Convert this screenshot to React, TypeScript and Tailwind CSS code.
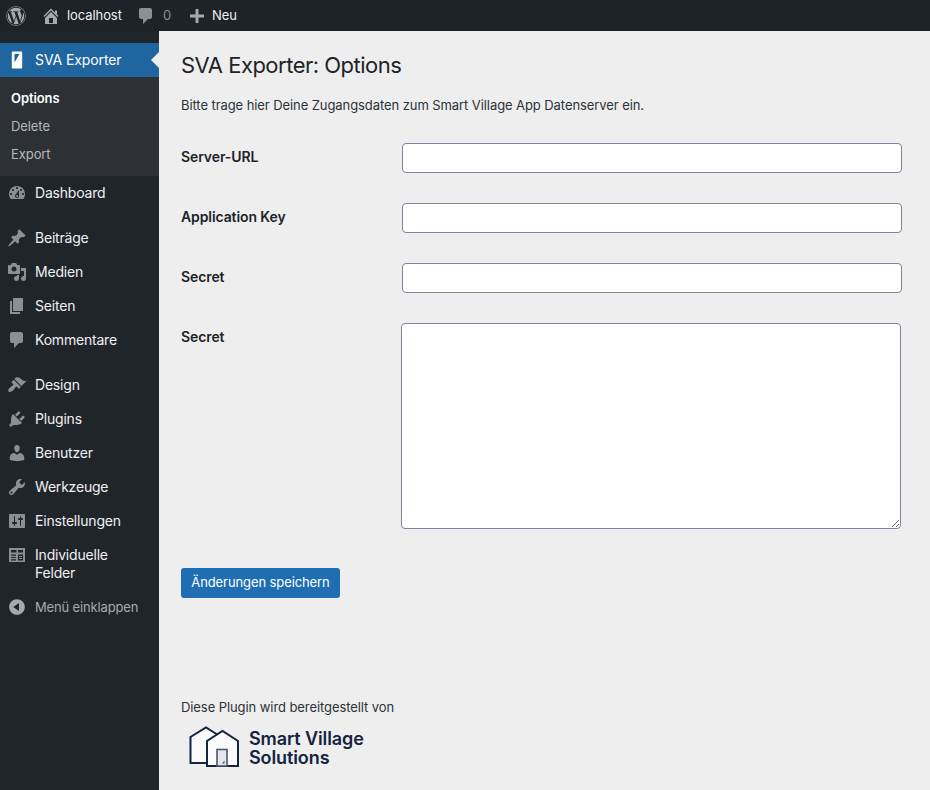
import React from "react";
import { FaWordpress } from "react-icons/fa";

const P: Record<string, string> = {
  home: "M16 8.5l1.53 1.53-1.06 1.06L10 4.62l-6.47 6.47-1.06-1.06L10 2.5l4 4v-2h2v4zm-6-2.46l6 5.99V18H4v-5.97zM12 17v-5H8v5h4z",
  comment: "M5 2h9c1.1 0 2 .9 2 2v7c0 1.1-.9 2-2 2h-2l-5 5v-5H5c-1.1 0-2-.9-2-2V4c0-1.1.9-2 2-2z",
  plus: "M17 8.5v3h-5.5V17h-3v-5.5H3v-3h5.5V3h3v5.5z",
  dashboard: "M3.76 16h12.48c1.1-1.37 1.76-3.11 1.76-5 0-4.42-3.58-8-8-8s-8 3.58-8 8c0 1.89.66 3.63 1.76 5zM10 4c.55 0 1 .45 1 1s-.45 1-1 1-1-.45-1-1 .45-1 1-1zM6 6c.55 0 1 .45 1 1s-.45 1-1 1-1-.45-1-1 .45-1 1-1zm8 0c.55 0 1 .45 1 1s-.45 1-1 1-1-.45-1-1 .45-1 1-1zm-5.37 5.55L12 7v6c0 1.1-.9 2-2 2s-2-.9-2-2c0-.57.24-1.08.63-1.45zM4 10c.55 0 1 .45 1 1s-.45 1-1 1-1-.45-1-1 .45-1 1-1zm12 0c.55 0 1 .45 1 1s-.45 1-1 1-1-.45-1-1 .45-1 1-1zm-5 3c0-.55-.45-1-1-1s-1 .45-1 1 .45 1 1 1 1-.45 1-1z",
  post: "M10.44 3.02l1.82-1.82 6.36 6.35-1.83 1.82c-1.05-.68-2.48-.57-3.41.36l-.75.75c-.92.93-1.04 2.35-.35 3.41l-1.83 1.82-2.41-2.41-2.8 2.79c-.42.42-3.38 2.71-3.8 2.29s1.86-3.39 2.28-3.81l2.79-2.79L4.1 9.36l1.83-1.82c1.05.69 2.48.57 3.4-.36l.75-.75c.93-.92 1.05-2.35.36-3.41z",
  media: "M13 11V4c0-.55-.45-1-1-1h-1.67L9 1H5L3.67 3H2c-.55 0-1 .45-1 1v7c0 .55.45 1 1 1h10c.55 0 1-.45 1-1zM7 4.5c1.38 0 2.5 1.12 2.5 2.5S8.38 9.5 7 9.5 4.5 8.38 4.5 7 5.62 4.5 7 4.5zM14 6h5v10.5c0 1.38-1.12 2.5-2.5 2.5S14 17.88 14 16.5s1.12-2.5 2.5-2.5c.17 0 .34.02.5.05V9h-3V6zm-4 8.05V13h2v3.5c0 1.38-1.12 2.5-2.5 2.5S7 17.88 7 16.5 8.12 14 9.5 14c.17 0 .34.02.5.05z",
  page: "M6 15V2h10v13H6zm-1 1h8v2H3V5h2v11z",
  appearance: "M14.48 11.06L7.41 3.99l1.5-1.5c.5-.56 2.3-.47 3.51.32 1.21.8 1.43 1.28 2.91 2.1 1.18.64 2.45 1.26 4.45.85zm-.71.71L6.7 4.7 4.93 6.47c-.39.39-.39 1.02 0 1.41l1.06 1.06c.39.39.39 1.03 0 1.42-.6.6-1.43 1.11-2.21 1.69-.35.26-.7.53-1.01.84C1.43 13.23.78 15.82 1.53 16.57c.75.75 3.34.1 4.68-1.24.31-.31.58-.66.84-1.01.58-.78 1.09-1.61 1.69-2.21.39-.39 1.02-.39 1.41 0l1.06 1.06c.39.39 1.02.39 1.41 0z",
  plugins: "M13.11 4.36L9.87 7.6 8 5.73l3.24-3.24c.35-.34 1.05-.2 1.56.32.52.51.66 1.21.31 1.55zm-8 1.77l.91-1.12 9.01 9.01-1.19.84c-.71.71-2.63 1.16-3.82 1.16H6.14L4.9 17.26c-.59.59-1.54.59-2.12 0-.59-.58-.59-1.53 0-2.12l1.24-1.24v-3.88c0-1.13.4-3.19 1.09-3.89zm7.26 3.97l3.24-3.24c.34-.35 1.04-.21 1.55.31.52.51.66 1.21.31 1.55l-3.24 3.25z",
  users: "M10 9.25c-2.27 0-2.73-3.44-2.73-3.44C7 4.02 7.82 2 9.97 2c2.16 0 2.98 2.02 2.71 3.81 0 0-.41 3.44-2.68 3.44zm0 2.57L12.72 10c2.39 0 4.52 2.33 4.52 4.53v2.49s-3.65 1.13-7.24 1.13c-3.65 0-7.24-1.13-7.24-1.13v-2.49c0-2.25 1.94-4.48 4.47-4.48z",
  tools: "M16.68 9.77c-1.34 1.34-3.3 1.67-4.95.99l-5.41 6.52c-.99.99-2.59.99-3.58 0s-.99-2.59 0-3.57l6.52-5.42c-.68-1.65-.35-3.61.99-4.95 1.28-1.28 3.12-1.62 4.72-1.06l-2.89 2.89 2.82 2.82 2.86-2.87c.53 1.58.18 3.39-1.08 4.65zM3.81 16.21c.4.39 1.04.39 1.43 0 .4-.4.4-1.04 0-1.43-.39-.4-1.03-.4-1.43 0-.39.39-.39 1.03 0 1.43z",
  settings: "M18 16V4c0-.55-.45-1-1-1H3c-.55 0-1 .45-1 1v12c0 .55.45 1 1 1h14c.55 0 1-.45 1-1zM8 11h1c.55 0 1 .45 1 1s-.45 1-1 1H8v1.5c0 .28-.22.5-.5.5s-.5-.22-.5-.5V13H6c-.55 0-1-.45-1-1s.45-1 1-1h1V5.5c0-.28.22-.5.5-.5s.5.22.5.5V11zm5-2h-1c-.55 0-1-.45-1-1s.45-1 1-1h1V5.5c0-.28.22-.5.5-.5s.5.22.5.5V7h1c.55 0 1 .45 1 1s-.45 1-1 1h-1v5.5c0 .28-.22.5-.5.5s-.5-.22-.5-.5V9z",
  fields: "M2 3h16v14H2zM4 5v2.5h5.5V5zM11 5v2.5h5V5zM4 9.5v1.2h5v-1.2zM4 11.9v1.2h5v-1.2zM4 14.3v1.2h5v-1.2zM11 9.5v6h5v-6zM12 11h3v1h-3zM12 13h3v1h-3z",
  collapse: "M10 2.16c4.33 0 7.84 3.51 7.84 7.84s-3.51 7.84-7.84 7.84S2.16 14.33 2.16 10 5.71 2.16 10 2.16zm2 11.72V6.12L6.18 9.97z",
  phone: "M6 1.5h8c.8 0 1.2.4 1.2 1.2v14.6c0 .8-.4 1.2-1.2 1.2H6c-.8 0-1.2-.4-1.2-1.2V2.7c0-.8.4-1.2 1.2-1.2zM7.5 4v8.5L12.5 4z",
};

function Icon({ name, className }: { name: string; className: string }) {
  return (
    <svg viewBox="0 0 20 20" className={className} fill="currentColor" fillRule="evenodd" aria-hidden="true">
      <path d={P[name]} />
    </svg>
  );
}

function Item({ icon, lines }: { icon: string; lines: string[] }) {
  return (
    <div className="flex py-[7px] pl-[7px] text-[14px] leading-[18px] tracking-[-0.2px] text-[#f0f0f1]">
      <Icon name={icon} className="mr-[8px] h-5 w-5 shrink-0 text-[#8c8f94]" />
      <div className="-mb-px pt-px">
        {lines.map((l) => (
          <div key={l}>{l}</div>
        ))}
      </div>
    </div>
  );
}

function Row({ label }: { label: string }) {
  return (
    <div className="flex h-[30px] items-center">
      <label className="w-[221px] pb-[3px] text-[14px] font-semibold tracking-[-0.1px] text-[#1d2327]">{label}</label>
      <input type="text" className="h-[30px] w-[500px] rounded-[4px] border border-[#7b8499] bg-white" />
    </div>
  );
}

export default function App() {
  return (
    <div className="flex h-[790px] w-[930px] flex-col overflow-hidden bg-[#eeeeef] font-['Inter','Liberation_Sans',sans-serif] text-[13px] tracking-[-0.08px] text-[#3c434a]">
      <header className="flex h-[31px] shrink-0 items-center bg-[#1d2327] text-[13px] text-[#f0f0f1]">
        <FaWordpress className="ml-[6px] h-5 w-5 text-[#a7aaad]" />
        <Icon name="home" className="ml-[15px] h-5 w-5 text-[#a7aaad]" />
        <span className="ml-[6px] w-[55px]">localhost</span>
        <Icon name="comment" className="ml-[14px] h-5 w-5 text-[#8c8f94]" />
        <span className="ml-[7px] w-[8px] text-[#8c8f94]">0</span>
        <Icon name="plus" className="ml-[16px] h-5 w-5 text-[#a7aaad]" />
        <span className="ml-[5px]">Neu</span>
      </header>
      <div className="flex min-h-0 flex-1">
        <aside className="w-[159px] shrink-0 bg-[#20252a] pt-[12px]">
          <div className="relative flex h-[34px] items-center bg-[#1f65a0] pl-[7px] text-[14px] tracking-[-0.1px] text-white">
            <Icon name="phone" className="mr-[8px] h-5 w-5 shrink-0 text-white" />
            <span className="-mt-px">SVA Exporter</span>
            <span className="absolute right-0 top-[9px] h-0 w-0 border-y-[8px] border-r-[8px] border-y-transparent border-r-[#eeeeef]" />
          </div>
          <div className="bg-[#2d3136] pt-[7px] pb-[8px] text-[13px] leading-[28px] text-[#b5b8bc]">
            <div className="pl-[11px] font-semibold text-white">Options</div>
            <div className="pl-[11px]">Delete</div>
            <div className="pl-[11px]">Export</div>
          </div>
          <Item icon="dashboard" lines={["Dashboard"]} />
          <div className="h-[11px]" />
          <Item icon="post" lines={["Beiträge"]} />
          <Item icon="media" lines={["Medien"]} />
          <Item icon="page" lines={["Seiten"]} />
          <Item icon="comment" lines={["Kommentare"]} />
          <div className="h-[11px]" />
          <Item icon="appearance" lines={["Design"]} />
          <Item icon="plugins" lines={["Plugins"]} />
          <Item icon="users" lines={["Benutzer"]} />
          <Item icon="tools" lines={["Werkzeuge"]} />
          <Item icon="settings" lines={["Einstellungen"]} />
          <Item icon="fields" lines={["Individuelle", "Felder"]} />
          <div className="flex items-center pl-[7px] pt-[9px] text-[13px] leading-[20px] tracking-[-0.15px] text-[#a7aaad]">
            <Icon name="collapse" className="mr-[8px] h-5 w-5 shrink-0 text-[#a7aaad]" />
            Menü einklappen
          </div>
        </aside>
        <main className="flex-1 pl-[22px]">
          <h1 className="mt-[20px] text-[22px] leading-[29px] font-normal tracking-[-0.5px] text-[#1d2327]">SVA Exporter: Options</h1>
          <p className="mt-[15px] leading-[20px] text-[#2c3338]">Bitte trage hier Deine Zugangsdaten zum Smart Village App Datenserver ein.</p>
          <div className="mt-[28px] flex flex-col gap-[30px]">
            <Row label="Server-URL" />
            <Row label="Application Key" />
            <Row label="Secret" />
            <div className="flex">
              <label className="w-[220px] pt-[5px] text-[14px] leading-[18px] font-semibold tracking-[-0.1px] text-[#1d2327]">Secret</label>
              <textarea className="h-[206px] w-[500px] rounded-[4px] border border-[#7b8499] bg-white" />
            </div>
          </div>
          <button className="mt-[39px] block h-[30px] w-[159px] rounded-[3px] bg-[#1f6eb3] text-[13px] tracking-[-0.1px] text-white">Änderungen speichern</button>
          <p className="mt-[99px] leading-[20px] text-[#2c3338]">Diese Plugin wird bereitgestellt von</p>
          <div className="mt-[9px] ml-[7px] flex items-center">
            <svg viewBox="0 0 52 43" className="h-[43px] w-[52px]" fill="none" stroke="#14233f" strokeWidth="2" aria-hidden="true">
              <path d="M19 37H2.5V11L18 1.5 30 9" fill="#fafafa" />
              <path d="M19 40V15L34.5 5 50 15v25z" fill="#fafafa" />
              <rect x="29" y="23.5" width="10" height="16.5" fill="#e6e7ec" stroke="#4a5570" strokeWidth="1.6" />
              <path d="M34 37.5l2.5-3v3z" fill="#4a5570" stroke="none" />
            </svg>
            <div className="ml-[9px] text-[18px] leading-[19px] font-semibold tracking-[-0.1px] text-[#14233f]">
              <div>Smart Village</div>
              <div>Solutions</div>
            </div>
          </div>
        </main>
      </div>
    </div>
  );
}
